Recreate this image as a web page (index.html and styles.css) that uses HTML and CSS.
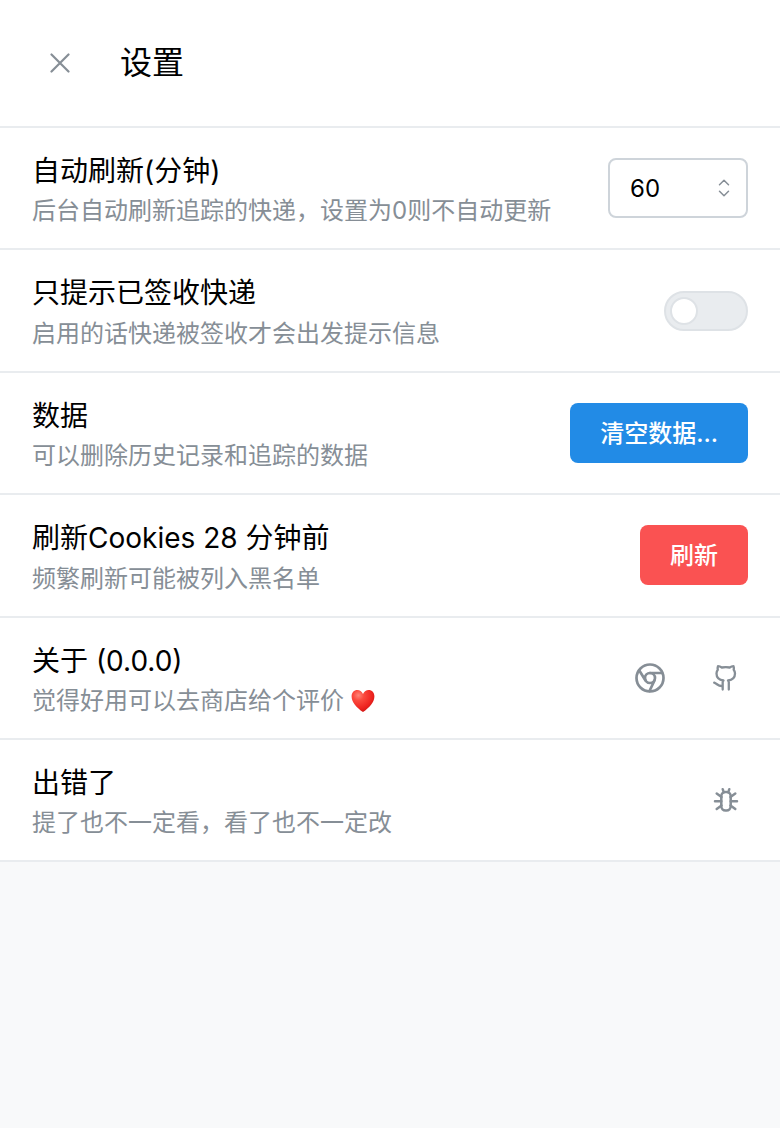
FILE: index.html
```html
<!DOCTYPE html>
<html lang="zh-CN">
<head>
<meta charset="utf-8">
<meta name="viewport" content="width=device-width, initial-scale=1">
<title>设置</title>
<link rel="stylesheet" href="styles.css">
</head>
<body>
<header class="header">
  <button class="icon-button icon-button-large" type="button" aria-label="关闭">
    <svg class="icon-close" viewBox="0 0 20 20" aria-hidden="true"><path d="M1.500 1.500l17 17M18.500 1.500l-17 17"/></svg>
  </button>
  <h1 class="page-title">设置</h1>
</header>
<main class="settings">
  <section class="row">
    <div class="row-text">
      <label class="row-title" for="interval">自动刷新(分钟)</label>
      <p class="row-note">后台自动刷新追踪的快递，设置为0则不自动更新</p>
    </div>
    <div class="number-field">
      <input class="number-input" id="interval" type="number" value="60" min="0">
      <div class="stepper">
        <button class="step step-up" type="button" aria-label="增加"><svg viewBox="0 0 12 7" aria-hidden="true"><path d="M1.500 5.800L6 1.300l4.500 4.500"/></svg></button>
        <button class="step step-down" type="button" aria-label="减少"><svg viewBox="0 0 12 7" aria-hidden="true"><path d="M1.500 1.200L6 5.700l4.500-4.500"/></svg></button>
      </div>
    </div>
  </section>
  <section class="row">
    <div class="row-text">
      <label class="row-title" for="signed">只提示已签收快递</label>
      <p class="row-note">启用的话快递被签收才会出发提示信息</p>
    </div>
    <input class="switch" id="signed" type="checkbox" role="switch">
  </section>
  <section class="row">
    <div class="row-text">
      <h2 class="row-title">数据</h2>
      <p class="row-note">可以删除历史记录和追踪的数据</p>
    </div>
    <button class="button button-blue" type="button">清空数据...</button>
  </section>
  <section class="row">
    <div class="row-text">
      <h2 class="row-title">刷新Cookies 28 分钟前</h2>
      <p class="row-note">频繁刷新可能被列入黑名单</p>
    </div>
    <button class="button button-red" type="button">刷新</button>
  </section>
  <section class="row">
    <div class="row-text">
      <h2 class="row-title">关于 (0.0.0)</h2>
      <p class="row-note">觉得好用可以去商店给个评价
        <svg class="heart" viewBox="0 0 24 24" role="img" aria-label="爱心">
          <defs>
            <radialGradient id="heart-fill" cx="30%" cy="24%" r="80%">
              <stop offset="0" stop-color="#ff8578"/>
              <stop offset="0.3" stop-color="#fb4a3e"/>
              <stop offset="0.75" stop-color="#ee2420"/>
              <stop offset="1" stop-color="#cf1614"/>
            </radialGradient>
          </defs>
          <path fill="url(#heart-fill)" d="M12 5C10.800 2.300 8.700 1 6.400 1 3 1 .6 3.700.6 7.400.6 13 5.600 18.600 12 23c6.400-4.400 11.400-10 11.400-15.600C23.400 3.700 21 1 17.600 1 15.300 1 13.200 2.300 12 5z"/>
        </svg>
      </p>
    </div>
    <div class="actions">
      <button class="icon-button" type="button" aria-label="Chrome 商店">
        <svg class="icon" viewBox="0 0 32 32" aria-hidden="true"><circle cx="16" cy="16" r="13.500"/><circle cx="16" cy="16" r="5"/><path d="M16 11h12M5.300 8.500l6.200 10M20.500 18.500L15.500 29"/></svg>
      </button>
      <button class="icon-button" type="button" aria-label="GitHub">
        <svg class="icon icon-thin" viewBox="0 0 32 32" aria-hidden="true"><path d="M12.700 27.500v-7.500c0-.8.300-1.200.8-1.500-4.300-.5-7-2.800-7-6.900 0-1.700.5-2.900 1.300-3.900-.3-1.200-.2-2.500.2-3.600 1.500 0 2.700.6 3.800 1.400 2.500-.5 5.400-.5 7.900 0 1.100-.8 2.300-1.400 3.800-1.400.4 1.100.5 2.400.2 3.600.8 1 1.300 2.200 1.300 3.900 0 4.100-2.700 6.400-7 6.900.5.300.8.700.8 1.500v7.500M12.700 23.900c-4.200.9-5.500-2.300-8.500-3.300"/></svg>
      </button>
    </div>
  </section>
  <section class="row">
    <div class="row-text">
      <h2 class="row-title">出错了</h2>
      <p class="row-note">提了也不一定看，看了也不一定改</p>
    </div>
    <button class="icon-button" type="button" aria-label="反馈问题">
      <svg class="icon icon-medium" viewBox="0 0 32 32" aria-hidden="true"><rect x="11.300" y="8" width="9.400" height="18.500" rx="4.200"/><path d="M5 17.200h6.300M20.700 17.200H27M6.700 9.500l4.800 3.500M25.300 9.500l-4.800 3.500M6.700 25l4.800-3.500M25.300 25l-4.800-3.500M12.700 5.200l1 3M19.300 5.200l-1 3"/></svg>
    </button>
  </section>
</main>
</body>
</html>
```
FILE: styles.css
```css
*,
*::before {
  box-sizing: border-box;
}

body {
  margin: 0;
  background: #f8f9fa;
  color: #000;
  font-family: Inter, "Noto Sans CJK SC", sans-serif;
  line-height: 1.55;
}

h1,
h2,
p {
  margin: 0;
  font-weight: 400;
}

button,
input {
  margin: 0;
  font-family: inherit;
}

button {
  padding: 0;
  border: 0;
  background: none;
  cursor: pointer;
}

svg {
  display: block;
  fill: none;
  stroke: currentColor;
  stroke-linecap: round;
  stroke-linejoin: round;
}

.header {
  display: flex;
  align-items: center;
  gap: 32px;
  padding: 35px 32px;
  background: #fff;
  border-bottom: 2px solid #e9ecef;
}

.page-title {
  font-size: 32px;
  line-height: 56px;
}

.row {
  display: flex;
  align-items: center;
  justify-content: space-between;
  gap: 32px;
  padding: 20px 32px;
  background: #fff;
  border-bottom: 2px solid #e9ecef;
}

.row-text {
  padding-top: 2px;
}

.row-title {
  display: block;
  font-size: 28px;
}

.row-note {
  color: #868e96;
  font-size: 24px;
  line-height: 35px;
}

.heart {
  display: inline-block;
  width: 24px;
  height: 24px;
  vertical-align: -4px;
  stroke: none;
}

.number-field {
  display: flex;
  flex: none;
  width: 140px;
  height: 60px;
  border: 2px solid #ced4da;
  border-radius: 8px;
  background: #fff;
}

.number-input {
  flex: 1;
  min-width: 0;
  padding: 0 0 0 20px;
  border: 0;
  outline: 0;
  background: none;
  color: #000;
  font-size: 24px;
  appearance: textfield;
}

.number-input::-webkit-inner-spin-button,
.number-input::-webkit-outer-spin-button {
  appearance: none;
  margin: 0;
}

.stepper {
  display: grid;
  grid-template-rows: 1fr 1fr;
  width: 44px;
}

.step {
  display: flex;
  justify-content: center;
  color: #868e96;
}

.step svg {
  width: 12px;
  height: 7px;
  stroke-width: 1.5;
}

.step-up {
  align-items: flex-end;
  padding-bottom: 2px;
}

.step-down {
  align-items: flex-start;
  padding-top: 2px;
}

.switch {
  flex: none;
  display: flex;
  align-items: center;
  width: 84px;
  height: 40px;
  padding: 0 4px;
  border: 2px solid #dee2e6;
  border-radius: 20px;
  background: #e9ecef;
  appearance: none;
  cursor: pointer;
}

.switch::before {
  content: "";
  width: 28px;
  height: 28px;
  border: 2px solid #dee2e6;
  border-radius: 50%;
  background: #fff;
}

.switch:checked {
  justify-content: flex-end;
  border-color: #228be6;
  background: #228be6;
}

.button {
  flex: none;
  height: 60px;
  padding: 0 30px 3px;
  border-radius: 8px;
  color: #fff;
  font-size: 24px;
  font-weight: 500;
}

.button-blue {
  background: #228be6;
}

.button-red {
  background: #fa5252;
}

.actions {
  display: flex;
  flex: none;
  gap: 32px;
}

.icon-button {
  display: flex;
  flex: none;
  align-items: center;
  justify-content: center;
  width: 44px;
  height: 44px;
  color: #868e96;
}

.icon-button-large {
  width: 56px;
  height: 56px;
}

.icon {
  width: 32px;
  height: 32px;
  stroke-width: 2.7;
}

.icon-medium {
  stroke-width: 2.5;
}

.icon-thin {
  stroke-width: 2.3;
}

.icon-close {
  width: 20px;
  height: 20px;
  stroke-width: 2.2;
}
```
